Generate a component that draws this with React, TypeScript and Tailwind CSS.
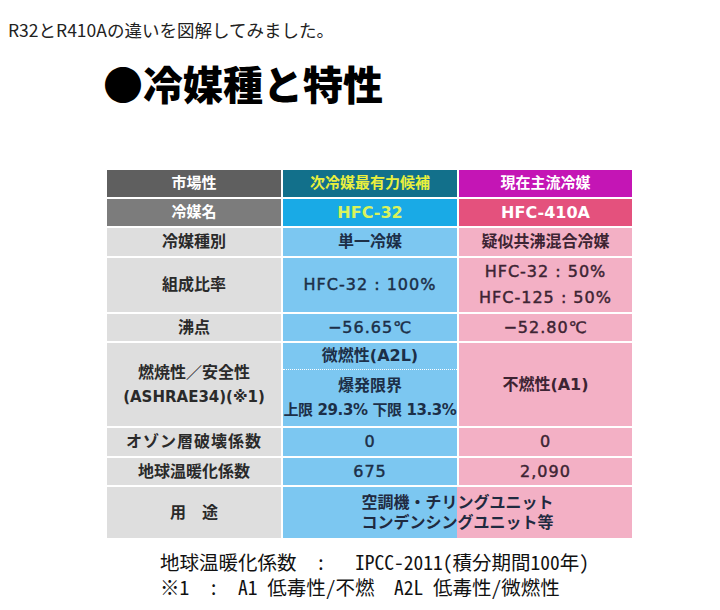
import type React from "react"

const jp = { fontFamily: '"Noto Sans CJK JP", "Noto Sans", sans-serif' }
const table = { fontFamily: '"DejaVu Sans", "Noto Sans CJK JP", sans-serif' }
const mono = { fontFamily: '"Noto Sans Mono CJK JP", "Noto Sans CJK JP", monospace' }

function Cell({ className, children }: { className: string; children: React.ReactNode }) {
  return <div className={`flex flex-col items-center justify-center text-center ${className}`}>{children}</div>
}

const label = "bg-[#dedede] text-[#2a2a2a] text-[16px] font-bold"
const blue = "bg-[#7cc7f1] text-[#1c2f48] text-[16px] font-bold"
const pink = "bg-[#f3b0c5] text-[#3d2433] text-[16px] font-bold"
// latin figures: book weight, slightly thickened
const num = "!font-normal tracking-[1px] [-webkit-text-stroke:0.45px_currentColor]"

export default function App() {
  return (
    <div className="min-h-screen bg-white" style={jp}>
      <p className="pl-2 pt-[19px] text-[17.5px] leading-[22px] text-[#222]">R32とR410Aの違いを図解してみました。</p>
      <div className="ml-[103px]">
        <h2 className="mt-[22px] text-[40px] font-black leading-[40px] text-black">●冷媒種と特性</h2>

        <div className="mt-[67px] ml-[4px] grid w-[525px] grid-cols-[174px_174px_173px] gap-[2px] bg-white" style={table}>
          {/* header */}
          <Cell className="h-[27px] bg-[#5f5f5f] text-[15px] font-bold text-white">市場性</Cell>
          <Cell className="h-[27px] bg-[#12708b] text-[15px] font-bold text-[#e9ef3e]">次冷媒最有力候補</Cell>
          <Cell className="h-[27px] bg-[#c415b5] text-[15px] font-bold text-white">現在主流冷媒</Cell>

          <Cell className="h-[27px] bg-[#7c7c7c] text-[15px] font-bold text-white">冷媒名</Cell>
          <Cell className="h-[27px] bg-[#19aae6] text-[16px] font-bold text-[#d9f35c]">HFC-32</Cell>
          <Cell className="h-[27px] bg-[#e4517d] text-[16px] font-bold text-white">HFC-410A</Cell>

          {/* body */}
          <Cell className={`h-[28px] ${label}`}>冷媒種別</Cell>
          <Cell className={`h-[28px] ${blue}`}>単一冷媒</Cell>
          <Cell className={`h-[28px] ${pink}`}>疑似共沸混合冷媒</Cell>

          <Cell className={`h-[54px] ${label}`}>組成比率</Cell>
          <Cell className={`h-[54px] ${blue} ${num}`}>HFC-32 : 100%</Cell>
          <Cell className={`h-[54px] leading-[26px] ${pink} ${num}`}>
            <span>HFC-32 : 50%</span>
            <span>HFC-125 : 50%</span>
          </Cell>

          <Cell className={`h-[27px] ${label}`}>沸点</Cell>
          <Cell className={`h-[27px] ${blue} ${num}`}>−56.65℃</Cell>
          <Cell className={`h-[27px] ${pink} ${num}`}>−52.80℃</Cell>

          <Cell className={`h-[83px] leading-[24px] ${label}`}>
            <span>燃焼性／安全性</span>
            <span className="text-[15px]">(ASHRAE34)(※1)</span>
          </Cell>
          <div className={`flex h-[83px] flex-col ${blue}`}>
            <div className="flex h-[27px] items-center justify-center border-b border-dotted border-white">微燃性(A2L)</div>
            <div className="flex flex-1 flex-col items-center justify-center leading-[24px]">
              <span>爆発限界</span>
              <span className="text-[15px] tracking-[-0.4px]">上限 29.3% 下限 13.3%</span>
            </div>
          </div>
          <Cell className={`h-[83px] ${pink}`}>不燃性(A1)</Cell>

          <Cell className={`h-[28px] tracking-[1px] ${label}`}>オゾン層破壊係数</Cell>
          <Cell className={`h-[28px] ${blue} ${num}`}>0</Cell>
          <Cell className={`h-[28px] ${pink} ${num}`}>0</Cell>

          <Cell className={`h-[27px] ${label}`}>地球温暖化係数</Cell>
          <Cell className={`h-[27px] ${blue} ${num}`}>675</Cell>
          <Cell className={`h-[27px] ${pink} ${num}`}>2,090</Cell>

          <Cell className={`h-[51px] ${label}`}>用　途</Cell>
          <Cell className="col-span-2 h-[51px] bg-[linear-gradient(90deg,#7cc7f1_50%,#f3b0c5_50%)] text-[16px] font-bold leading-[20px] text-[#1f2a40]">
            <span>空調機・チリングユニット</span>
            <span>コンデンシングユニット等</span>
          </Cell>
        </div>

        <div className="mt-[11px] ml-[57px] whitespace-pre text-[19.5px] leading-[25px] text-[#111]" style={mono}>
          <div>{"地球温暖化係数  :   IPCC-2011(積分期間100年)"}</div>
          <div>{"※1  :  A1 低毒性/不燃  A2L 低毒性/微燃性"}</div>
        </div>
      </div>
    </div>
  )
}
